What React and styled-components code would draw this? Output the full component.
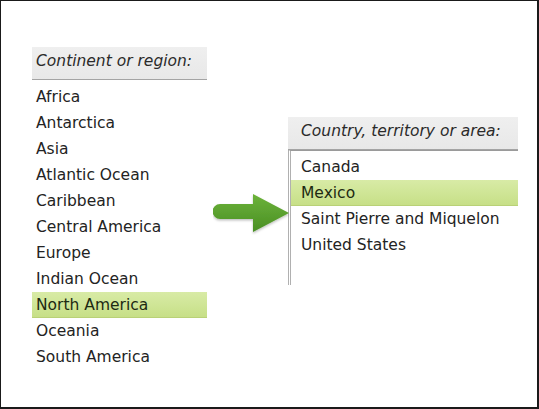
import React from 'react';
import styled, { createGlobalStyle } from 'styled-components';

const GlobalStyle = createGlobalStyle`
  html, body { margin: 0; padding: 0; background: #fff; }
  body { font-family: "DejaVu Sans", Verdana, sans-serif; }
`;

const Frame = styled.div`
  box-sizing: border-box;
  width: 539px;
  height: 409px;
  border: 1px solid #1a1a1a;
  border-right-width: 2px;
  border-bottom-width: 2px;
  background: #fff;
  display: flex;
  align-items: flex-start;
  padding: 46px 0 0 31px;
  overflow: hidden;
`;

const Panel = styled.div`
  width: ${p => p.$width}px;
  margin-top: ${p => p.$top || 0}px;
  margin-left: ${p => p.$left || 0}px;
  flex-shrink: 0;
`;

const Header = styled.div`
  background: linear-gradient(#efefef, #e8e8e8);
  border-bottom: 1px solid #a4a4a4;
  height: 33px;
  box-sizing: border-box;
  padding-left: ${p => p.$indent}px;
  padding-top: 1px;
  font-style: italic;
  font-size: 15.5px;
  line-height: 26px;
  color: #2a2a2a;
  white-space: nowrap;
`;

const List = styled.div`
  display: flex;
  flex-direction: column;
  padding-top: ${p => p.$padTop}px;
  height: ${p => (p.$height ? `${p.$height}px` : 'auto')};
  box-sizing: border-box;
  border-left: ${p => (p.$framed ? '3px double #b0b0b0' : 'none')};
  border-top: ${p => (p.$framed ? '1px solid #9a9a9a' : 'none')};
`;

const Row = styled.div`
  height: 26px;
  line-height: 26px;
  font-size: 15.5px;
  padding-left: ${p => p.$indent}px;
  color: ${p => (p.$selected ? '#1d2a12' : '#232323')};
  background: ${p =>
    p.$selected ? 'linear-gradient(#d8eba6, #c6df86)' : 'transparent'};
  box-shadow: ${p => (p.$selected ? 'inset 0 -1px 0 #b9d177' : 'none')};
  white-space: nowrap;
`;

const ArrowWrap = styled.div`
  margin-top: 146px;
  margin-left: 6px;
  width: 78px;
  height: 42px;
  flex-shrink: 0;
  position: relative;
  z-index: 1;
`;

const continents = [
  'Africa',
  'Antarctica',
  'Asia',
  'Atlantic Ocean',
  'Caribbean',
  'Central America',
  'Europe',
  'Indian Ocean',
  'North America',
  'Oceania',
  'South America',
];

const countries = ['Canada', 'Mexico', 'Saint Pierre and Miquelon', 'United States'];

function Arrow() {
  return (
    <ArrowWrap>
      <svg width="78" height="42" viewBox="0 0 78 42">
        <defs>
          <linearGradient id="ag" x1="0" y1="0" x2="0" y2="1">
            <stop offset="0" stopColor="#6cb33a" />
            <stop offset="1" stopColor="#4a8f24" />
          </linearGradient>
          <filter id="sh" x="-10%" y="-10%" width="130%" height="140%">
            <feDropShadow dx="0" dy="1.5" stdDeviation="1.2" floodColor="#000" floodOpacity="0.25" />
          </filter>
        </defs>
        <path
          d="M7 11 H40 V1 L76 20 L40 39 V26 H7 A7.5 7.5 0 0 1 7 11 Z"
          fill="url(#ag)"
          filter="url(#sh)"
        />
      </svg>
    </ArrowWrap>
  );
}

export default function App() {
  return (
    <>
      <GlobalStyle />
      <Frame>
        <Panel $width={175}>
          <Header $indent={4}>Continent or region:</Header>
          <List $padTop={4}>
            {continents.map(c => (
              <Row key={c} $indent={4} $selected={c === 'North America'}>
                {c}
              </Row>
            ))}
          </List>
        </Panel>
        <Arrow />
        <Panel $width={230} $top={70} $left={-3}>
          <Header $indent={13}>Country, territory or area:</Header>
          <List $framed $padTop={3} $height={135}>
            {countries.map(c => (
              <Row key={c} $indent={10} $selected={c === 'Mexico'}>
                {c}
              </Row>
            ))}
          </List>
        </Panel>
      </Frame>
    </>
  );
}
